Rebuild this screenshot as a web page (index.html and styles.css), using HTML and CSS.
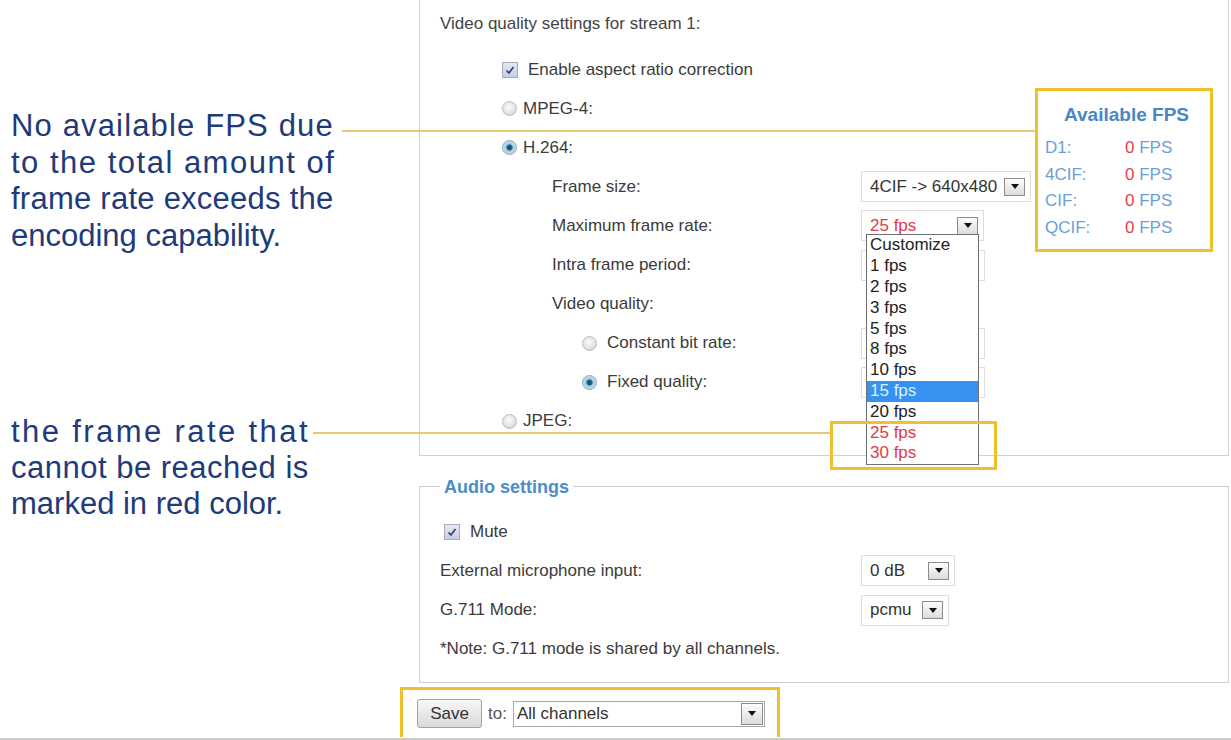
FILE: index.html
```html
<!DOCTYPE html>
<html lang="en">
<head>
<meta charset="utf-8">
<title>Video quality settings</title>
<link rel="stylesheet" href="styles.css">
</head>
<body>
<div class="page">
  <aside class="notes">
    <p class="note note-1">
      <span class="ln ls-a">No available FPS due</span>
      <span class="ln ls-b">to the total amount of</span>
      <span class="ln ls-c">frame rate exceeds the</span>
      <span class="ln">encoding capability.</span>
    </p>
    <p class="note note-2">
      <span class="ln ls-d">the frame rate that</span>
      <span class="ln ls-e">cannot be reached is</span>
      <span class="ln">marked in red color.</span>
    </p>
  </aside>

  <main class="settings">
    <section class="panel video">
      <div class="title">Video quality settings for stream 1:</div>

      <div class="row">
        <div class="lbl l1"><span class="cb"><svg viewBox="0 0 16 16"><path d="M4 8.5 L6.8 11.5 L12 4.5" fill="none" stroke="#2d3f73" stroke-width="1.8"/></svg></span><span class="cb-text">Enable aspect ratio correction</span></div>
      </div>
      <div class="row">
        <div class="lbl l1"><span class="radio"></span><span class="r-text">MPEG-4:</span></div>
      </div>
      <div class="row">
        <div class="lbl l1"><span class="radio on"></span><span class="r-text">H.264:</span></div>
      </div>
      <div class="row">
        <div class="lbl l2">Frame size:</div>
        <div class="sel w-fs"><span class="sel-val">4CIF -&gt; 640x480</span><span class="dd-btn"><svg viewBox="0 0 8 5"><polygon points="0,0 8,0 4,5" fill="#111"/></svg></span></div>
      </div>
      <div class="row">
        <div class="lbl l2">Maximum frame rate:</div>
        <div class="sel w-fr"><span class="sel-val red">25 fps</span><span class="dd-btn"><svg viewBox="0 0 8 5"><polygon points="0,0 8,0 4,5" fill="#111"/></svg></span>
          <ul class="dd-list">
            <li>Customize</li>
            <li>1 fps</li>
            <li>2 fps</li>
            <li>3 fps</li>
            <li>5 fps</li>
            <li>8 fps</li>
            <li>10 fps</li>
            <li class="picked">15 fps</li>
            <li>20 fps</li>
            <li class="red">25 fps</li>
            <li class="red">30 fps</li>
          </ul>
        </div>
      </div>
      <div class="row">
        <div class="lbl l2">Intra frame period:</div>
        <div class="sel w-in"></div>
      </div>
      <div class="row">
        <div class="lbl l2">Video quality:</div>
      </div>
      <div class="row">
        <div class="lbl l3"><span class="radio"></span><span class="r-text wide">Constant bit rate:</span></div>
        <div class="sel w-in"></div>
      </div>
      <div class="row">
        <div class="lbl l3"><span class="radio on"></span><span class="r-text wide">Fixed quality:</span></div>
        <div class="sel w-in"></div>
      </div>
      <div class="row">
        <div class="lbl l1"><span class="radio"></span><span class="r-text">JPEG:</span></div>
      </div>
    </section>

    <fieldset class="panel audio">
      <legend>Audio settings</legend>
      <div class="arow">
        <div class="lbl a1"><span class="cb"><svg viewBox="0 0 16 16"><path d="M4 8.5 L6.8 11.5 L12 4.5" fill="none" stroke="#2d3f73" stroke-width="1.8"/></svg></span><span class="cb-text">Mute</span></div>
      </div>
      <div class="arow">
        <div class="lbl">External microphone input:</div>
        <div class="sel w-db"><span class="sel-val">0 dB</span><span class="dd-btn"><svg viewBox="0 0 8 5"><polygon points="0,0 8,0 4,5" fill="#111"/></svg></span></div>
      </div>
      <div class="arow">
        <div class="lbl">G.711 Mode:</div>
        <div class="sel w-pc"><span class="sel-val">pcmu</span><span class="dd-btn"><svg viewBox="0 0 8 5"><polygon points="0,0 8,0 4,5" fill="#111"/></svg></span></div>
      </div>
      <div class="arow">
        <div class="lbl">*Note: G.711 mode is shared by all channels.</div>
      </div>
    </fieldset>

    <div class="savebar">
      <button class="save-btn" type="button">Save</button>
      <span class="to">to:</span>
      <div class="sel2"><span class="sel-val">All channels</span><span class="dd-btn big"><svg viewBox="0 0 8 5"><polygon points="0,0 8,0 4,5" fill="#111"/></svg></span></div>
    </div>
  </main>
</div>

<div class="guide g1"></div>
<div class="guide g2"></div>
<div class="hl"></div>
<div class="fps-box">
  <div class="fps-title">Available FPS</div>
  <div class="fps-grid">
    <span class="fk">D1:</span><span class="fv"><b>0</b> FPS</span>
    <span class="fk">4CIF:</span><span class="fv"><b>0</b> FPS</span>
    <span class="fk">CIF:</span><span class="fv"><b>0</b> FPS</span>
    <span class="fk">QCIF:</span><span class="fv"><b>0</b> FPS</span>
  </div>
</div>
</body>
</html>
```

FILE: styles.css
```css
* { box-sizing: border-box; }

html, body { margin: 0; padding: 0; }

body {
  width: 1231px;
  height: 740px;
  overflow: hidden;
  position: relative;
  background: #ffffff;
  font-family: "Liberation Sans", Arial, sans-serif;
  color: #3b3b3b;
}

.page {
  display: grid;
  grid-template-columns: 400px 831px;
  height: 740px;
  border-bottom: 2px solid #cbcbcb;
}

/* ---------- annotations ---------- */
.notes {
  padding: 108px 0 0 11px;
  color: #213a7a;
  font-size: 31px;
}
.note {
  margin: 0;
  display: flex;
  flex-direction: column;
}
.note-1 { line-height: 36.7px; }
.note-2 { margin-top: 159px; line-height: 36px; }
.ln { white-space: nowrap; }
.ls-a { letter-spacing: 1.15px; }
.ls-b { letter-spacing: 1.5px; }
.ls-c { letter-spacing: 0.25px; }
.ls-d { letter-spacing: 2.4px; }
.ls-e { letter-spacing: 0.5px; }

/* ---------- settings column ---------- */
.settings {
  display: flex;
  flex-direction: column;
  align-items: flex-start;
}

.panel {
  width: 810px;
  margin-left: 19px;
  border: 1px solid #d0d0d0;
}

.video {
  border-top: none;
  padding: 4px 0 14px;
}

.title {
  height: 39px;
  display: flex;
  align-items: center;
  padding-left: 20px;
  margin-bottom: 7px;
  font-size: 17px;
  color: #444;
}

.row {
  height: 39.1px;
  display: grid;
  grid-template-columns: 441px auto;
  align-items: center;
  font-size: 17px;
}

.lbl {
  display: flex;
  align-items: center;
  white-space: nowrap;
}
.l1 { padding-left: 82px; }
.l2 { padding-left: 132px; }
.l3 { padding-left: 162px; }

.cb {
  width: 16px;
  height: 16px;
  border: 1px solid #a7abc6;
  background: linear-gradient(#e6e8f3, #c8cce2);
  display: inline-flex;
  flex: none;
}
.cb svg { width: 14px; height: 14px; }
.cb-text { margin-left: 10px; }

.radio {
  width: 15px;
  height: 15px;
  border-radius: 50%;
  border: 1px solid #bdbdbd;
  background: radial-gradient(circle at 45% 40%, #fbfbfb 0, #e3e3e3 55%, #c9c9c9 100%);
  flex: none;
}
.radio.on {
  border-color: #8ea7ba;
  background: radial-gradient(circle at 50% 50%, #0e4a6e 0, #23688f 2.6px, #a9cbe0 3.6px, #dbeaf4 100%);
}
.r-text { margin-left: 6px; }
.r-text.wide { margin-left: 10px; }

/* ---------- selects ---------- */
.sel {
  position: relative;
  height: 31px;
  border: 1px solid #dedede;
  background: #fff;
  display: flex;
  align-items: center;
  justify-content: space-between;
  padding: 0 5px 0 8px;
}
.w-fs { width: 170px; }
.w-fr { width: 123px; }
.w-in { width: 124px; }
.w-db { width: 94px; }
.w-pc { width: 88px; }

.sel-val {
  font-size: 17px;
  color: #333;
  white-space: nowrap;
}
.red { color: #e23a46; }
.sel-val.red { color: #e23a46; }

.dd-btn {
  width: 21px;
  height: 18px;
  border: 1px solid #8c8c8c;
  background: linear-gradient(#fcfcfc, #dcdcdc);
  display: flex;
  align-items: center;
  justify-content: center;
  flex: none;
}
.dd-btn svg { width: 8px; height: 5px; }
.dd-btn.big { width: 22px; height: 22px; }

.dd-list {
  position: absolute;
  left: 4px;
  top: 23px;
  width: 113px;
  margin: 0;
  padding: 0;
  list-style: none;
  border: 1px solid #707070;
  background: #fff;
  z-index: 5;
}
.dd-list li {
  height: 20.8px;
  line-height: 20.8px;
  padding-left: 3px;
  font-size: 17px;
  color: #222;
  white-space: nowrap;
}
.dd-list li.red { color: #e23a46; }
.dd-list li.picked {
  background: #3592ef;
  color: #dcefff;
}

/* ---------- audio ---------- */
.audio {
  margin: 20px 0 0 19px;
  padding: 14px 0 13px 20px;
  min-width: 0;
}
.audio legend {
  padding: 0 4px;
  font-size: 18px;
  line-height: 22px;
  font-weight: bold;
  color: #4b8dc8;
}
.arow {
  height: 39.3px;
  display: grid;
  grid-template-columns: 421px auto;
  align-items: center;
  font-size: 17px;
}
.a1 { padding-left: 4px; }

/* ---------- save bar ---------- */
.savebar {
  margin-top: 4px;
  width: 380px;
  height: 50px;
  border: 3px solid #efc12c;
  border-bottom: none;
  display: flex;
  align-items: center;
  padding-left: 14px;
}
.save-btn {
  width: 65px;
  height: 29px;
  border: 1px solid #a3a3a3;
  border-radius: 3px;
  background: linear-gradient(#f8f8f8, #d9d9d9);
  font-family: "Liberation Sans", Arial, sans-serif;
  font-size: 17px;
  color: #333;
  padding: 0;
}
.to {
  margin-left: 6px;
  font-size: 17px;
  color: #555;
}
.sel2 {
  margin-left: 6px;
  width: 252px;
  height: 26px;
  border: 1px solid #a9a9a9;
  display: flex;
  align-items: center;
  justify-content: space-between;
  padding: 0 1px 0 3px;
}

/* ---------- overlays (callouts) ---------- */
.guide {
  position: absolute;
  height: 2px;
  background: #e8c872;
}
.g1 { left: 342px; top: 130px; width: 694px; }
.g2 { left: 313px; top: 432px; width: 518px; }

.hl {
  position: absolute;
  left: 830px;
  top: 421px;
  width: 167px;
  height: 49px;
  border: 3px solid #efc12c;
  z-index: 6;
}

.fps-box {
  position: absolute;
  left: 1035px;
  top: 88px;
  width: 178px;
  height: 164px;
  border: 3px solid #efc12c;
  background: #fff;
  padding: 12px 0 0 7px;
}
.fps-title {
  height: 24px;
  line-height: 24px;
  text-align: center;
  padding-right: 2px;
  font-size: 19px;
  font-weight: bold;
  color: #4a86c4;
  margin-bottom: 8px;
}
.fps-grid {
  display: grid;
  grid-template-columns: 80px auto;
  grid-auto-rows: 26.5px;
  align-items: center;
  font-size: 17px;
  color: #6c9fd8;
}
.fv b { font-weight: normal; color: #e5414f; }
```
